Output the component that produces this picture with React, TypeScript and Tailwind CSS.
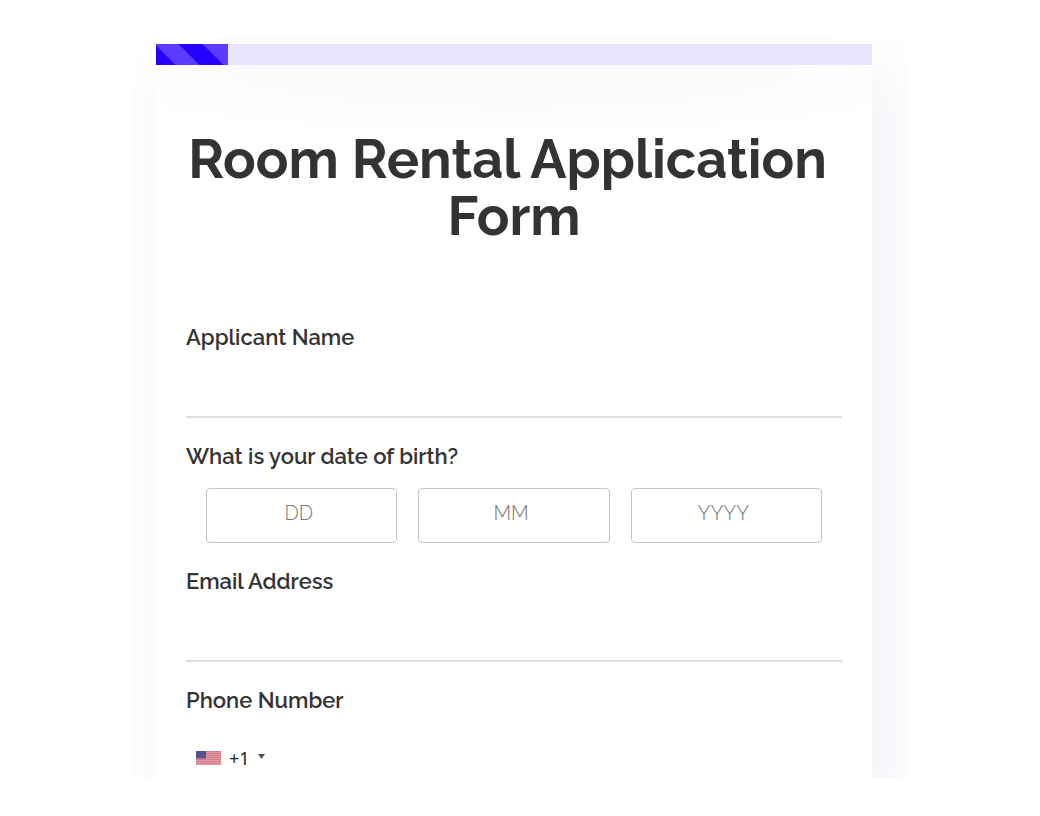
import type { ReactNode } from "react";

const labelClass = "block text-[22px] leading-6 font-semibold text-[#333]";
const lineInputClass =
  "mt-[21px] block h-12 w-full border-b-2 border-[#dedede] bg-transparent text-xl outline-none";
const dateParts = [
  { placeholder: "DD", label: "Day" },
  { placeholder: "MM", label: "Month" },
  { placeholder: "YYYY", label: "Year" },
];

function TextField({ id, type, children }: { id: string; type: string; children: ReactNode }) {
  return (
    <div>
      <label htmlFor={id} className={labelClass}>
        {children}
      </label>
      <input id={id} type={type} className={lineInputClass} />
    </div>
  );
}

function Flag() {
  return (
    <svg viewBox="0 0 25 14" className="h-[14px] w-[25px]" aria-hidden="true">
      <rect width="25" height="14" fill="#e09aa3" />
      {[0, 2, 4, 6, 8, 10, 12].map((y) => (
        <rect key={y} y={y} width="25" height="1" fill="#d67b87" />
      ))}
      <rect width="10" height="7.5" fill="#54548c" />
    </svg>
  );
}

export default function App() {
  return (
    <main className="min-h-screen bg-white pt-[37px] font-['Raleway','Open_Sans',sans-serif]">
      <div className="mx-auto max-w-[776px] overflow-hidden pt-[7px] pr-9 pl-6">
        <div className="shadow-[12px_30px_60px_rgba(80,80,170,0.09)]">
          <div
            role="progressbar"
            aria-label="Form progress"
            aria-valuenow={10}
            className="h-[21px] bg-[#e9e5ff]"
          >
            <div className="h-full w-1/10 bg-[linear-gradient(45deg,#2600ff_14px,#5c3bff_14px,#5c3bff_31px,#2600ff_31px,#2600ff_48px,#5c3bff_48px)]" />
          </div>
          <form className="bg-white bg-[radial-gradient(ellipse_70%_75px_at_50%_0,#fafafd,#fbfbfd_50%,#ffffff)] bg-no-repeat px-[30px] pt-[66px] pb-1">
            <h1 className="text-center text-[54px] leading-[57px] font-bold text-[#333]">
              Room Rental Application&nbsp;
              <br />
              Form
            </h1>
            <div className="mt-20 flex flex-col gap-[26px]">
              <TextField id="name" type="text">
                Applicant Name
              </TextField>
              <fieldset>
                <legend className={labelClass}>What is your date of birth?</legend>
                <div className="mt-5 grid grid-cols-3 gap-[21px] px-5">
                  {dateParts.map((part) => (
                    <input
                      key={part.label}
                      aria-label={part.label}
                      placeholder={part.placeholder}
                      inputMode="numeric"
                      className="h-[55px] min-w-0 rounded border border-[#c4c4c4] pr-1.5 pb-1.5 text-center text-xl font-light outline-none placeholder:text-[#757575]"
                    />
                  ))}
                </div>
              </fieldset>
              <TextField id="email" type="email">
                Email Address
              </TextField>
              <div>
                <label htmlFor="phone" className={labelClass}>
                  Phone Number
                </label>
                <div className="mt-[30px] flex h-8 items-center px-2.5">
                  <button type="button" aria-label="Country code" className="flex items-center">
                    <Flag />
                    <span className="ml-2 font-['Noto_Sans',sans-serif] text-lg leading-6 text-[#222]">
                      +1
                    </span>
                    <svg viewBox="0 0 7 5" className="mb-1 ml-2 h-[5px] w-[7px]" aria-hidden="true">
                      <path d="M0 0h7L3.5 5z" fill="#555" />
                    </svg>
                  </button>
                  <input id="phone" type="tel" className="ml-3 min-w-0 flex-1 bg-transparent text-lg outline-none" />
                </div>
              </div>
            </div>
          </form>
        </div>
      </div>
    </main>
  );
}
